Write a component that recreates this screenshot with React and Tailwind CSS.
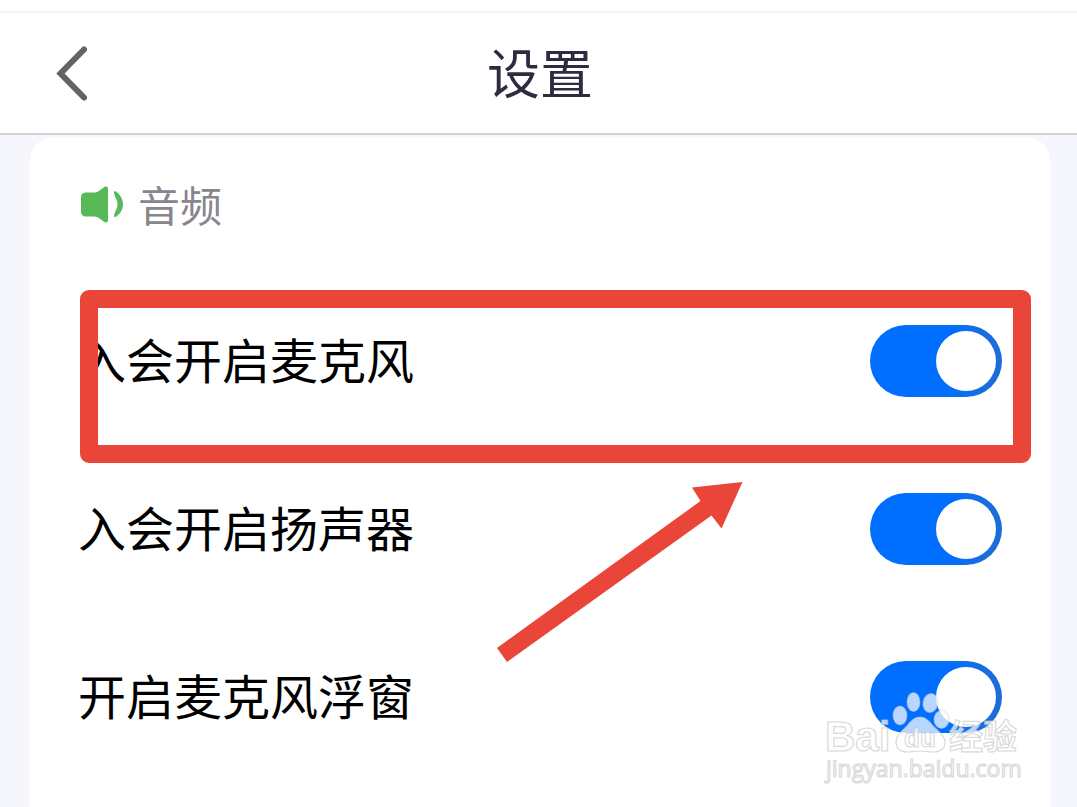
import React, { useState } from 'react';

const INITIAL_SETTINGS = [
  { id: 'mic', label: '入会开启麦克风', enabled: true },
  { id: 'speaker', label: '入会开启扬声器', enabled: true },
  { id: 'floating', label: '开启麦克风浮窗', enabled: true },
];

const BackIcon = () => (
  <svg width="40" height="60" viewBox="0 0 40 60" fill="none" aria-hidden="true">
    <path
      d="M31 6.5 7.500 30.500l23.500 24"
      stroke="#636365"
      strokeWidth="6"
      strokeLinecap="round"
      strokeLinejoin="miter"
    />
  </svg>
);

const SpeakerIcon = () => (
  <svg width="44" height="40" viewBox="0 0 44 40" fill="#58b957" aria-hidden="true">
    <path d="M6 7.500H14c2.500 0 4-.8 5.800-2.300L24.300 2C26 1 28 1.700 28 3.500v32c0 1.800-2 2.500-3.700 1.500L19.800 33.800C18 32.300 16.500 31.500 14 31.500H6C2.800 31.500 1 29.500 1 27v-15C1 9.500 2.800 7.500 6 7.500z" />
    <path d="M34 7.500c0-1.200 1-1.700 2-.9C40.500 10 43 14.500 43 19.300S40.500 28.800 36 31.700c-1 .7-2 .2-1.900-1C34.400 27 37.500 24 37.500 19.300S34.200 11.500 34 7.500z" />
  </svg>
);

const Arrow = () => (
  <svg
    className="pointer-events-none absolute top-9 left-[466px] z-10"
    width="250"
    height="184"
    viewBox="0 0 250 184"
    aria-hidden="true"
  >
    <path d="M1 167 204.500 20 196 6.500 246.500 1 225.500 47.500 215.500 34.500 11 181z" fill="#e94639" />
  </svg>
);

// Translucent brand mark in the bottom corner
const Watermark = () => (
  <svg
    className="pointer-events-none absolute top-[77px] right-6 z-10"
    width="202"
    height="96"
    viewBox="0 0 202 96"
    fill="#ffffff"
    fillOpacity="0.72"
    stroke="#c4c4c4"
    strokeOpacity="0.65"
    strokeWidth="1.2"
  >
    <g strokeOpacity="0.4">
      <ellipse cx="76" cy="25.500" rx="7" ry="9.500" />
      <ellipse cx="89.500" cy="12" rx="6.500" ry="9.500" />
      <ellipse cx="106.500" cy="13" rx="7.500" ry="9.500" transform="rotate(12 106.500 13)" />
      <ellipse cx="117.500" cy="29.500" rx="7.500" ry="9" />
    </g>
    <path d="M96 27c6 0 10 5 14 10 4 4 11 8 11 15 0 7-5 10-12 10-5 0-8-1-13-1s-8 1-13 1c-7 0-11-4-11-10 0-7 6-11 10-15 4-5 8-10 14-10z" />
    <text x="1" y="61" className="font-['Liberation_Sans',sans-serif] text-[42px] font-bold">
      Bai
    </text>
    <text x="80" y="57" className="font-['Liberation_Sans',sans-serif] text-[26px] font-bold">
      du
    </text>
    <text x="125" y="59" className="font-['Noto_Sans_CJK_SC',sans-serif] text-[34px] font-bold">
      经验
    </text>
    <text x="2" y="87" className="font-['Open_Sans',sans-serif] text-[23px]">
      jingyan.baidu.com
    </text>
  </svg>
);

const SettingRow = ({ setting, onToggle, children }) => (
  <li className="relative flex h-42 items-center justify-between px-12">
    <label htmlFor={setting.id} className="pt-1 text-5xl text-black">
      {setting.label}
    </label>
    <input
      id={setting.id}
      type="checkbox"
      role="switch"
      checked={setting.enabled}
      onChange={() => onToggle(setting.id)}
      className="flex h-18 w-33 shrink-0 cursor-pointer appearance-none items-center rounded-full bg-gray-300 p-1.5 before:block before:size-15 before:rounded-full before:bg-white before:content-[''] checked:justify-end checked:bg-linear-to-r checked:from-[#006eff] checked:from-60% checked:to-[#1a6ddb] checked:to-90%"
    />
    {children}
  </li>
);

const App = () => {
  const [settings, setSettings] = useState(INITIAL_SETTINGS);

  const handleToggle = (id) => {
    setSettings((prev) =>
      prev.map((item) => (item.id === id ? { ...item, enabled: !item.enabled } : item))
    );
  };

  return (
    <div className="flex min-h-screen flex-col bg-[#f6f7fc] font-['Liberation_Sans','Noto_Sans_CJK_SC',sans-serif]">
      <div className="h-[13px] border-b-2 border-[#f5f5f6] bg-white" />
      <header className="grid h-[122px] grid-cols-[1fr_auto_1fr] items-center border-b-2 border-[#d2d2d4] bg-white pl-[53px] pr-[50px]">
        <button type="button" aria-label="返回" className="w-10 cursor-pointer">
          <BackIcon />
        </button>
        <h1 className="pt-1 text-[53px] leading-none text-[#2c2b40]">设置</h1>
      </header>

      <main className="flex flex-1 flex-col pt-0.5 pr-[27px] pl-[30px]">
        <section className="relative flex-1 rounded-t-3xl bg-white">
          <h2 className="flex h-34 items-center gap-3.5 px-[50px] text-[42px] text-[#87868d]">
            <SpeakerIcon />
            <span className="pt-1">音频</span>
          </h2>
          <ul className="pt-1">
            {settings.map((setting) => (
              <SettingRow key={setting.id} setting={setting} onToggle={handleToggle}>
                {setting.id === 'mic' && (
                  <div className="pointer-events-none absolute top-[13px] right-[19px] -bottom-[18px] left-[50px] z-10 rounded-[9px] border-18 border-[#e94639]" />
                )}
                {setting.id === 'speaker' && <Arrow />}
                {setting.id === 'floating' && <Watermark />}
              </SettingRow>
            ))}
          </ul>
        </section>
      </main>
    </div>
  );
};

export default App;
